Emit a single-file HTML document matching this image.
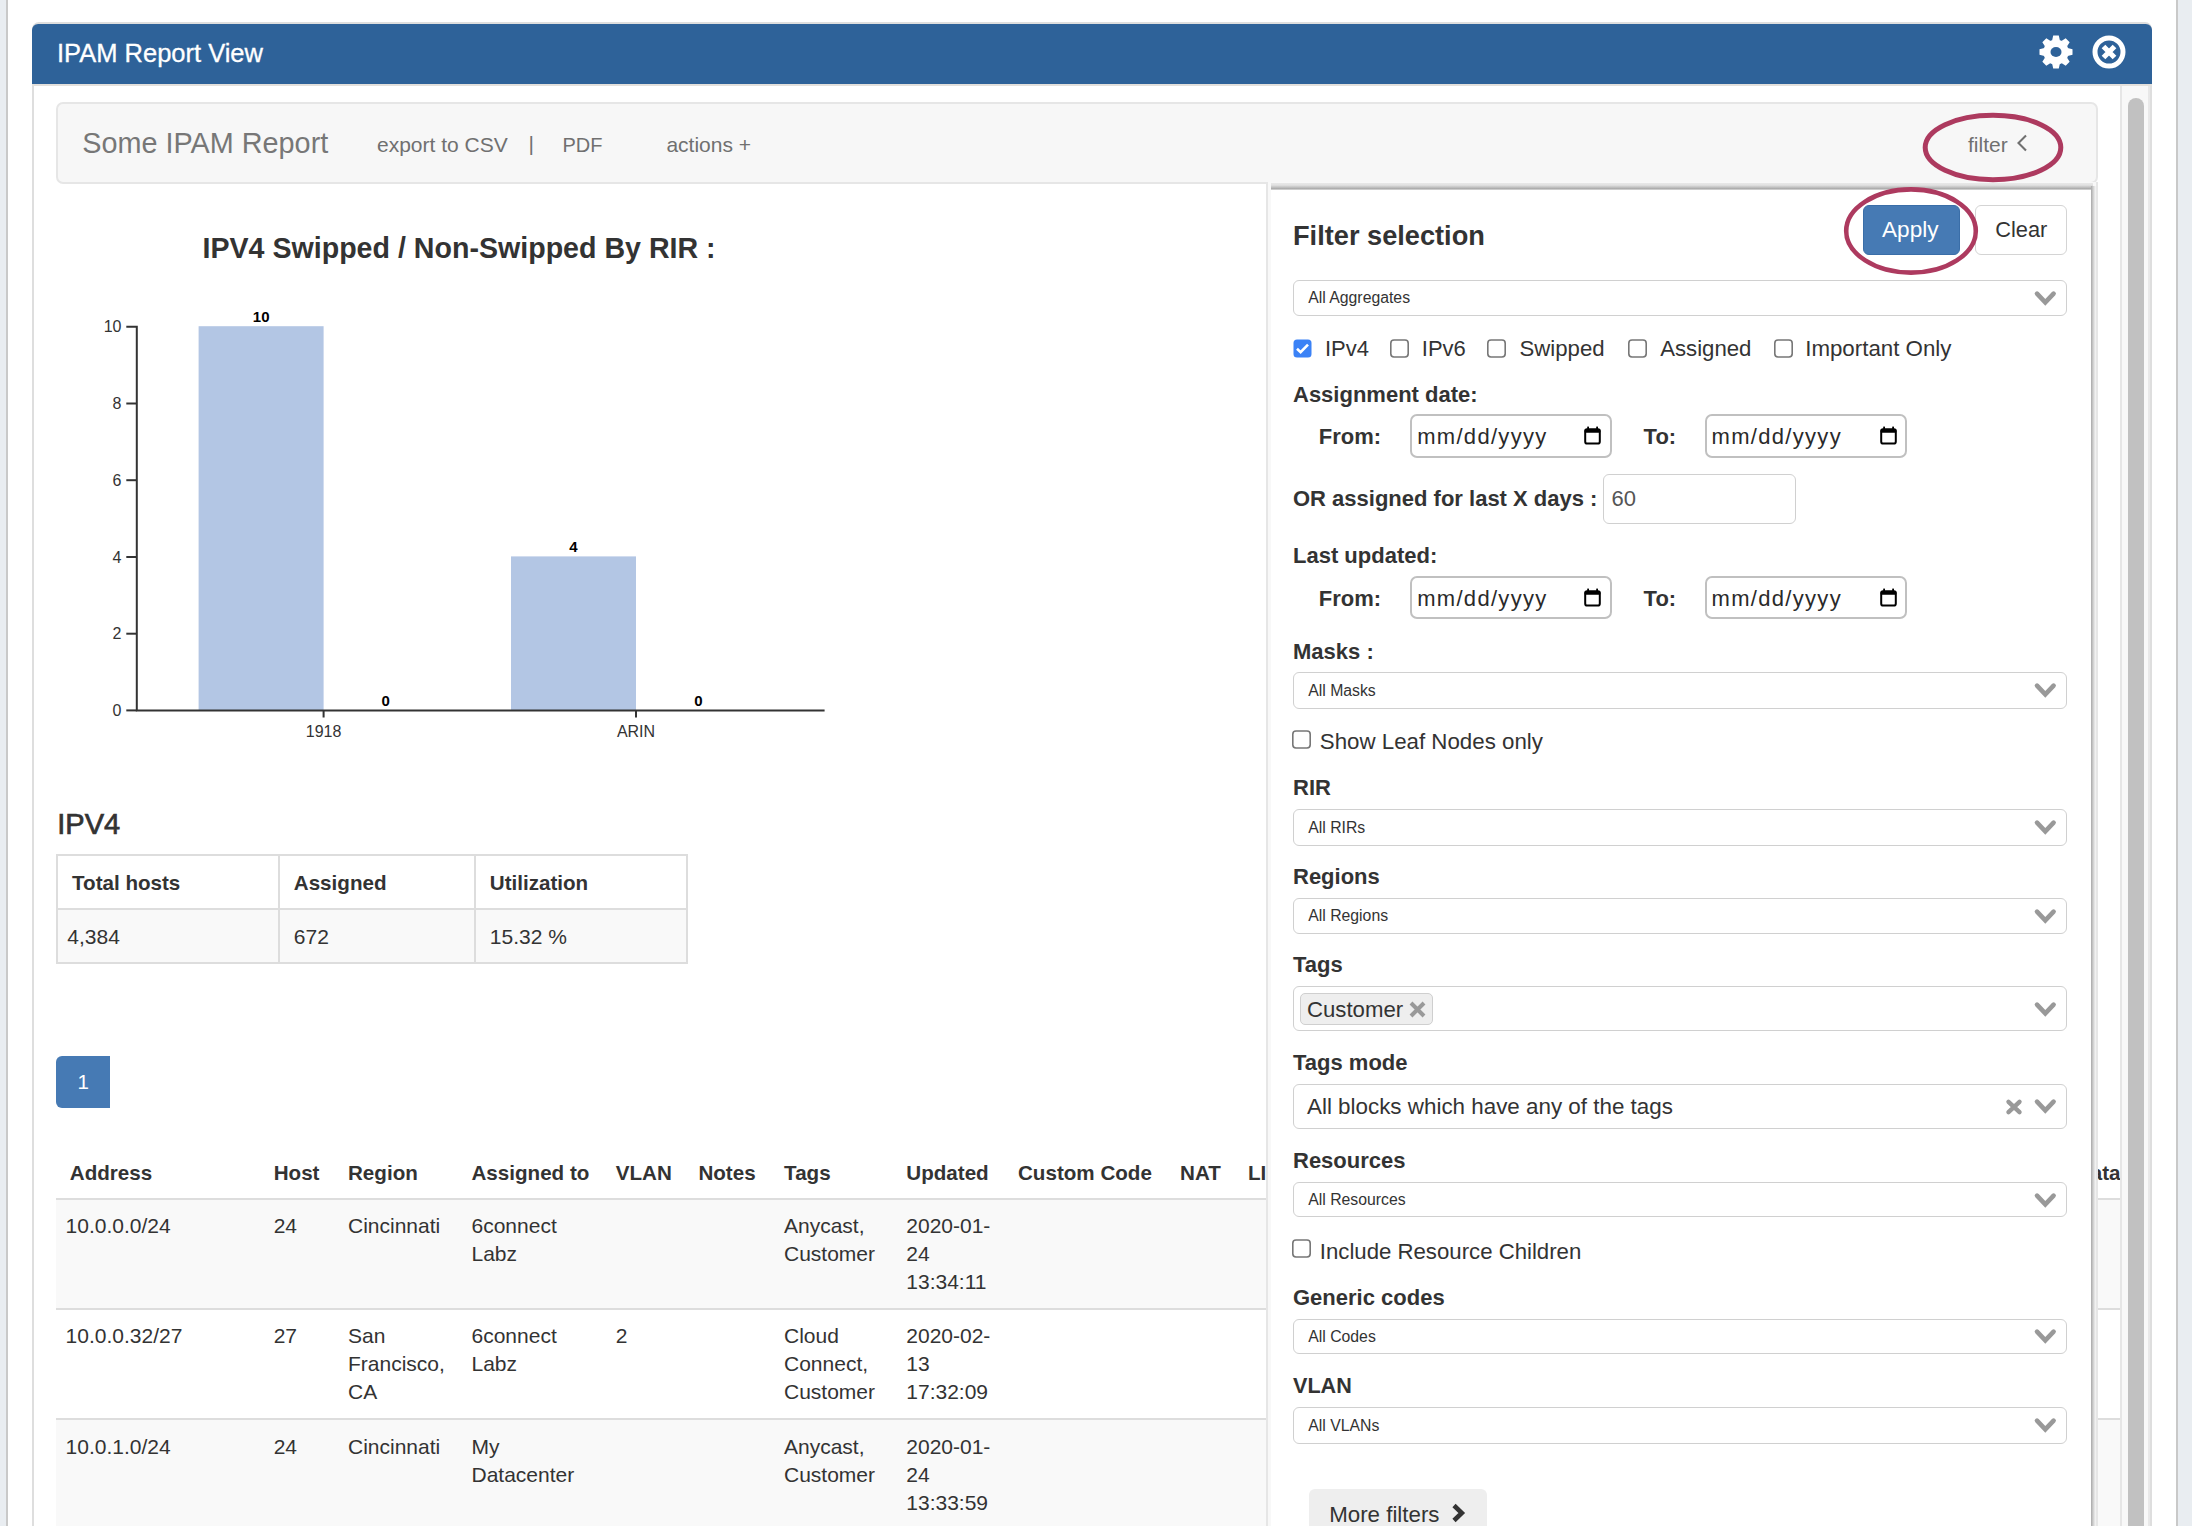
<!DOCTYPE html>
<html><head><meta charset="utf-8"><title>IPAM Report View</title>
<style>
html,body{margin:0;padding:0;}
body{width:2192px;height:1526px;overflow:hidden;position:relative;background:#fff;font-family:"Liberation Sans", sans-serif;}
.t{position:absolute;white-space:nowrap;}
.r{position:absolute;}
svg.r{overflow:visible;}
</style></head><body>
<div class="r" style="left:0.0px;top:0.0px;width:6.0px;height:1526.0px;background:#e9edf1"></div>
<div class="r" style="left:6.0px;top:0.0px;width:2.0px;height:1526.0px;background:#c9c9c9"></div>
<div class="r" style="left:2176.0px;top:0.0px;width:2.0px;height:1526.0px;background:#c9c9c9"></div>
<div class="r" style="left:2178.0px;top:0.0px;width:14.0px;height:1526.0px;background:#e9edf1"></div>
<div class="r" style="left:32.0px;top:22.0px;width:2120.0px;height:1600.0px;background:#fff;border:2px solid #dedede;border-radius:7px 7px 0 0;box-sizing:border-box"></div>
<div class="r" style="left:32.0px;top:23.5px;width:2120.0px;height:60.5px;background:#2e6299;border-radius:6px 6px 0 0"></div>
<div class="r" style="left:32.0px;top:84.0px;width:2120.0px;height:2.0px;background:#e3e0dc"></div>
<div class="t" style="left:57.0px;top:41.2px;font-size:25.5px;line-height:25.5px;font-weight:400;color:#fff;-webkit-text-stroke:0.3px #fff">IPAM Report View</div>
<svg class="r" style="left:2037.7px;top:34px" width="36" height="36" viewBox="0 0 36 36">
<g fill="#fff"><circle cx="18" cy="18" r="12.6"/>
<path d="M14.10 6.40 L15.20 1.50 L20.80 1.50 L21.90 6.40 Z M23.44 7.04 L27.69 4.35 L31.65 8.31 L28.96 12.56 Z M29.60 14.10 L34.50 15.20 L34.50 20.80 L29.60 21.90 Z M28.96 23.44 L31.65 27.69 L27.69 31.65 L23.44 28.96 Z M21.90 29.60 L20.80 34.50 L15.20 34.50 L14.10 29.60 Z M12.56 28.96 L8.31 31.65 L4.35 27.69 L7.04 23.44 Z M6.40 21.90 L1.50 20.80 L1.50 15.20 L6.40 14.10 Z M7.04 12.56 L4.35 8.31 L8.31 4.35 L12.56 7.04 Z"/></g>
<ellipse cx="18" cy="18" rx="5.5" ry="4.9" fill="#2e6299"/></svg>
<svg class="r" style="left:2091px;top:34.2px" width="36" height="36" viewBox="-18 -18 36 36">
<circle r="14" fill="none" stroke="#fff" stroke-width="5"/>
<path d="M-5.5 -5.5 L5.5 5.5 M5.5 -5.5 L-5.5 5.5" stroke="#fff" stroke-width="5.2" stroke-linecap="butt"/></svg>
<div class="r" style="left:2120.0px;top:86.0px;width:30.0px;height:1440.0px;background:#f8f8f8;border-left:2px solid #e6e6e6;border-right:2px solid #e8e8e8;box-sizing:border-box"></div>
<div class="r" style="left:2128.0px;top:98.0px;width:16.0px;height:1500.0px;background:#c1c1c1;border-radius:8px"></div>
<div class="r" style="left:56.0px;top:102.0px;width:2042.0px;height:82.0px;background:#f7f7f7;border:2px solid #e6e6e6;border-radius:7px;box-sizing:border-box"></div>
<div class="t" style="left:82.3px;top:129.1px;font-size:28.8px;line-height:28.8px;font-weight:400;color:#777;">Some IPAM Report</div>
<div class="t" style="left:377.0px;top:133.6px;font-size:21px;line-height:21px;font-weight:400;color:#707070;">export to CSV</div>
<div class="t" style="left:528.6px;top:133.0px;font-size:21px;line-height:21px;font-weight:400;color:#707070;">|</div>
<div class="t" style="left:562.5px;top:134.5px;font-size:20px;line-height:20px;font-weight:400;color:#707070;">PDF</div>
<div class="t" style="left:666.4px;top:133.6px;font-size:21px;line-height:21px;font-weight:400;color:#707070;">actions +</div>
<div class="t" style="left:1968.0px;top:134.4px;font-size:21px;line-height:21px;font-weight:400;color:#707070;">filter</div>
<svg class="r" style="left:2012px;top:132px" width="20" height="22" viewBox="0 0 20 22"><path d="M14 3.5 L6.5 11 L14 18.5" fill="none" stroke="#707070" stroke-width="2.1"/></svg>
<div class="t" style="left:202.5px;top:234.4px;font-size:28.6px;line-height:28.6px;font-weight:700;color:#333;">IPV4 Swipped / Non-Swipped By RIR :</div>
<svg class="r" style="left:0;top:0" width="900" height="760" viewBox="0 0 900 760"><rect x="198.6" y="326.2" width="125" height="384.2" fill="#b3c6e4"/><rect x="511" y="556.4" width="125" height="154" fill="#b3c6e4"/><g stroke="#333" stroke-width="2" fill="none"><path d="M126.3 326.8 H136.8 V710.4 H824.6"/><path d="M126.3 403.5 H136.8"/><path d="M126.3 480.2 H136.8"/><path d="M126.3 557.0 H136.8"/><path d="M126.3 633.7 H136.8"/><path d="M126.3 710.4 H136.8"/><path d="M323.6 710.4 V717.5 M636 710.4 V717.5"/></g><g font-family='"Liberation Sans"' font-size="16" fill="#333" text-anchor="end"><text x="121.5" y="332.3">10</text><text x="121.5" y="409.0">8</text><text x="121.5" y="485.7">6</text><text x="121.5" y="562.5">4</text><text x="121.5" y="639.2">2</text><text x="121.5" y="715.9">0</text></g><g font-family='"Liberation Sans"' font-size="16" fill="#333" text-anchor="middle"><text x="323.6" y="737">1918</text><text x="636" y="737">ARIN</text></g><g font-family='"Liberation Sans"' font-size="15" font-weight="700" fill="#000" text-anchor="middle"><text x="261.2" y="321.9">10</text><text x="385.6" y="706">0</text><text x="573.5" y="551.8">4</text><text x="698.5" y="706">0</text></g></svg>
<div class="t" style="left:57.3px;top:809.5px;font-size:29px;line-height:29px;font-weight:400;color:#333;-webkit-text-stroke:0.7px #333">IPV4</div>
<div class="r" style="left:56.0px;top:854.0px;width:632.0px;height:110.0px;border:2px solid #ddd;box-sizing:border-box"></div>
<div class="r" style="left:58.0px;top:910.0px;width:628.0px;height:52.0px;background:#f9f9f9"></div>
<div class="r" style="left:56.0px;top:908.0px;width:632.0px;height:2.0px;background:#ddd"></div>
<div class="r" style="left:278.0px;top:854.0px;width:2.0px;height:110.0px;background:#ddd"></div>
<div class="r" style="left:474.0px;top:854.0px;width:2.0px;height:110.0px;background:#ddd"></div>
<div class="t" style="left:72.0px;top:872.5px;font-size:20.6px;line-height:20.6px;font-weight:700;color:#333;">Total hosts</div>
<div class="t" style="left:293.8px;top:872.5px;font-size:20.6px;line-height:20.6px;font-weight:700;color:#333;">Assigned</div>
<div class="t" style="left:489.8px;top:872.5px;font-size:20.6px;line-height:20.6px;font-weight:700;color:#333;">Utilization</div>
<div class="t" style="left:67.3px;top:925.8px;font-size:21px;line-height:21px;font-weight:400;color:#333;">4,384</div>
<div class="t" style="left:293.8px;top:925.8px;font-size:21px;line-height:21px;font-weight:400;color:#333;">672</div>
<div class="t" style="left:489.8px;top:925.8px;font-size:21px;line-height:21px;font-weight:400;color:#333;">15.32 %</div>
<div class="r" style="left:56.0px;top:1056.0px;width:54.0px;height:52.0px;background:#467ab4;border-radius:6px 0 0 6px"></div>
<div class="t" style="left:77.5px;top:1072.0px;font-size:20.5px;line-height:20.5px;font-weight:400;color:#fff;">1</div>
<div class="r" style="left:56.0px;top:1198.0px;width:2064.0px;height:2.0px;background:#ddd"></div>
<div class="r" style="left:56.0px;top:1200.0px;width:2064.0px;height:108.0px;background:#f9f9f9"></div>
<div class="r" style="left:56.0px;top:1308.0px;width:2064.0px;height:2.0px;background:#ddd"></div>
<div class="r" style="left:56.0px;top:1418.0px;width:2064.0px;height:2.0px;background:#ddd"></div>
<div class="r" style="left:56.0px;top:1420.0px;width:2064.0px;height:120.0px;background:#f9f9f9"></div>
<div class="t" style="left:69.8px;top:1162.8px;font-size:20.6px;line-height:20.6px;font-weight:700;color:#333;">Address</div>
<div class="t" style="left:273.7px;top:1162.8px;font-size:20.6px;line-height:20.6px;font-weight:700;color:#333;">Host</div>
<div class="t" style="left:348.0px;top:1162.8px;font-size:20.6px;line-height:20.6px;font-weight:700;color:#333;">Region</div>
<div class="t" style="left:471.5px;top:1162.8px;font-size:20.6px;line-height:20.6px;font-weight:700;color:#333;">Assigned to</div>
<div class="t" style="left:615.7px;top:1162.8px;font-size:20.6px;line-height:20.6px;font-weight:700;color:#333;">VLAN</div>
<div class="t" style="left:698.4px;top:1162.8px;font-size:20.6px;line-height:20.6px;font-weight:700;color:#333;">Notes</div>
<div class="t" style="left:784.1px;top:1162.8px;font-size:20.6px;line-height:20.6px;font-weight:700;color:#333;">Tags</div>
<div class="t" style="left:906.3px;top:1162.8px;font-size:20.6px;line-height:20.6px;font-weight:700;color:#333;">Updated</div>
<div class="t" style="left:1018.0px;top:1162.8px;font-size:20.6px;line-height:20.6px;font-weight:700;color:#333;">Custom Code</div>
<div class="t" style="left:1180.1px;top:1162.8px;font-size:20.6px;line-height:20.6px;font-weight:700;color:#333;">NAT</div>
<div class="t" style="left:1248.0px;top:1162.8px;font-size:20.6px;line-height:20.6px;font-weight:700;color:#333;">LIR</div>
<div class="r" style="left:1266px;top:1150px;width:854px;height:40px;overflow:hidden"><div class="t" style="right:-0.5px;top:12.8px;font-size:20.6px;line-height:20.6px;font-weight:700;color:#333">Metadata</div></div>
<div class="t" style="left:65.6px;top:1212.2px;font-size:21px;line-height:28px;color:#333">10.0.0.0/24</div>
<div class="t" style="left:273.7px;top:1212.2px;font-size:21px;line-height:28px;color:#333">24</div>
<div class="t" style="left:348px;top:1212.2px;font-size:21px;line-height:28px;color:#333">Cincinnati</div>
<div class="t" style="left:471.5px;top:1212.2px;font-size:21px;line-height:28px;color:#333">6connect<br>Labz</div>
<div class="t" style="left:784px;top:1212.2px;font-size:21px;line-height:28px;color:#333">Anycast,<br>Customer</div>
<div class="t" style="left:906.3px;top:1212.2px;font-size:21px;line-height:28px;color:#333">2020-01-<br>24<br>13:34:11</div>
<div class="t" style="left:65.6px;top:1322.4px;font-size:21px;line-height:28px;color:#333">10.0.0.32/27</div>
<div class="t" style="left:273.7px;top:1322.4px;font-size:21px;line-height:28px;color:#333">27</div>
<div class="t" style="left:348px;top:1322.4px;font-size:21px;line-height:28px;color:#333">San<br>Francisco,<br>CA</div>
<div class="t" style="left:471.5px;top:1322.4px;font-size:21px;line-height:28px;color:#333">6connect<br>Labz</div>
<div class="t" style="left:615.7px;top:1322.4px;font-size:21px;line-height:28px;color:#333">2</div>
<div class="t" style="left:784px;top:1322.4px;font-size:21px;line-height:28px;color:#333">Cloud<br>Connect,<br>Customer</div>
<div class="t" style="left:906.3px;top:1322.4px;font-size:21px;line-height:28px;color:#333">2020-02-<br>13<br>17:32:09</div>
<div class="t" style="left:65.6px;top:1432.7px;font-size:21px;line-height:28px;color:#333">10.0.1.0/24</div>
<div class="t" style="left:273.7px;top:1432.7px;font-size:21px;line-height:28px;color:#333">24</div>
<div class="t" style="left:348px;top:1432.7px;font-size:21px;line-height:28px;color:#333">Cincinnati</div>
<div class="t" style="left:471.5px;top:1432.7px;font-size:21px;line-height:28px;color:#333">My<br>Datacenter</div>
<div class="t" style="left:784px;top:1432.7px;font-size:21px;line-height:28px;color:#333">Anycast,<br>Customer</div>
<div class="t" style="left:906.3px;top:1432.7px;font-size:21px;line-height:28px;color:#333">2020-01-<br>24<br>13:33:59</div>
<div class="r" style="left:1266.0px;top:182.0px;width:832.0px;height:1400.0px;background:#f8f8f8;border-left:2px solid #e6e6e6;border-right:2px solid #e6e6e6;box-sizing:border-box"></div>
<div class="r" style="left:1271.0px;top:183.0px;width:822.0px;height:1400.0px;background:#fff"></div>
<div class="r" style="left:1271.0px;top:183.0px;width:822.0px;height:6.6px;background:linear-gradient(to bottom,#e8e8e8 0%,#e2e2e2 30%,#bdbdbd 65%,#a6a6a6 85%,#efefef 100%)"></div>
<div class="r" style="left:2091.0px;top:186.0px;width:5.0px;height:1400.0px;background:linear-gradient(to right,#a8a8a8 0%,#d0d0d0 45%,#ececec 80%,#f6f6f6 100%)"></div>
<div class="t" style="left:1293.0px;top:221.8px;font-size:27.2px;line-height:27.2px;font-weight:700;color:#333;">Filter selection</div>
<div class="r" style="left:1863.0px;top:205.0px;width:97.0px;height:50.0px;background:#467ab4;border:1px solid #3a6ea8;border-radius:6px;box-sizing:border-box"></div>
<div class="t" style="left:1882.0px;top:219.1px;font-size:22.6px;line-height:22.6px;font-weight:400;color:#fff;">Apply</div>
<div class="r" style="left:1975.0px;top:205.0px;width:92.0px;height:50.0px;background:#fff;border:1px solid #d4d4d4;border-radius:6px;box-sizing:border-box"></div>
<div class="t" style="left:1995.2px;top:218.7px;font-size:21.8px;line-height:21.8px;font-weight:400;color:#333;">Clear</div>
<div class="r" style="left:1293.0px;top:280.0px;width:773.6px;height:36.0px;border:1px solid #d0d0d0;border-radius:6px;box-sizing:border-box;background:#fff"></div>
<div class="t" style="left:1308.2px;top:290.2px;font-size:15.8px;line-height:15.8px;font-weight:400;color:#333;">All Aggregates</div>
<svg class="r" style="left:2034px;top:287.6px" width="23" height="22" viewBox="0 0 23 22"><path d="M3 5.6 L11.3 14.3 L19.6 5.6" fill="none" stroke="#999" stroke-width="4.6" stroke-linecap="round" stroke-linejoin="miter"/></svg>
<svg class="r" style="left:1293px;top:339px" width="19" height="19" viewBox="0 0 19 19"><rect x="0.5" y="0.5" width="18" height="18" rx="3.5" fill="#3b82f6"/><path d="M4 9.8 L7.6 13.2 L15 5.6" fill="none" stroke="#fff" stroke-width="2.6"/></svg>
<div class="t" style="left:1325.0px;top:338.3px;font-size:22px;line-height:22px;font-weight:400;color:#333;">IPv4</div>
<svg class="r" style="left:1390.4px;top:339px" width="19" height="19" viewBox="0 0 19 19"><rect x="0.8" y="1.0" width="17.4" height="17.0" rx="3.2" fill="#fff" stroke="#777" stroke-width="1.6"/></svg>
<div class="t" style="left:1421.8px;top:338.3px;font-size:22px;line-height:22px;font-weight:400;color:#333;">IPv6</div>
<svg class="r" style="left:1486.9px;top:339px" width="19" height="19" viewBox="0 0 19 19"><rect x="0.8" y="1.0" width="17.4" height="17.0" rx="3.2" fill="#fff" stroke="#777" stroke-width="1.6"/></svg>
<div class="t" style="left:1519.5px;top:338.1px;font-size:22.2px;line-height:22.2px;font-weight:400;color:#333;">Swipped</div>
<svg class="r" style="left:1628.4px;top:339px" width="19" height="19" viewBox="0 0 19 19"><rect x="0.8" y="1.0" width="17.4" height="17.0" rx="3.2" fill="#fff" stroke="#777" stroke-width="1.6"/></svg>
<div class="t" style="left:1660.2px;top:338.1px;font-size:22.2px;line-height:22.2px;font-weight:400;color:#333;">Assigned</div>
<svg class="r" style="left:1773.9px;top:339px" width="19" height="19" viewBox="0 0 19 19"><rect x="0.8" y="1.0" width="17.4" height="17.0" rx="3.2" fill="#fff" stroke="#777" stroke-width="1.6"/></svg>
<div class="t" style="left:1805.2px;top:338.0px;font-size:22.3px;line-height:22.3px;font-weight:400;color:#333;">Important Only</div>
<div class="t" style="left:1293.0px;top:383.9px;font-size:22px;line-height:22px;font-weight:700;color:#333;">Assignment date:</div>
<div class="t" style="left:1318.8px;top:425.7px;font-size:22px;line-height:22px;font-weight:700;color:#333;">From:</div>
<div class="t" style="left:1643.6px;top:425.7px;font-size:22px;line-height:22px;font-weight:700;color:#333;">To:</div>
<div class="r" style="left:1410.4px;top:414.3px;width:201.3px;height:43.5px;border:2.5px solid #c0c0c0;border-radius:7px;box-sizing:border-box;background:#fff"></div>
<div class="t" style="left:1417.2px;top:425.7px;font-size:22px;line-height:22px;font-weight:400;color:#2a2a2a;letter-spacing:1.3px">mm/dd/yyyy</div>
<svg class="r" style="left:1584.0px;top:426.3px" width="18" height="19" viewBox="0 0 18 19"><rect x="1.2" y="3.6" width="14.6" height="14" rx="2.2" fill="none" stroke="#000" stroke-width="2"/><rect x="0.5" y="2.6" width="16" height="4.2" rx="1.5" fill="#000"/><rect x="3.2" y="0.6" width="1.8" height="3" fill="#000"/><rect x="12.2" y="0.6" width="1.8" height="3" fill="#000"/></svg>
<div class="r" style="left:1704.8px;top:414.3px;width:202.4px;height:43.5px;border:2.5px solid #c0c0c0;border-radius:7px;box-sizing:border-box;background:#fff"></div>
<div class="t" style="left:1711.6px;top:425.7px;font-size:22px;line-height:22px;font-weight:400;color:#2a2a2a;letter-spacing:1.3px">mm/dd/yyyy</div>
<svg class="r" style="left:1879.5px;top:426.3px" width="18" height="19" viewBox="0 0 18 19"><rect x="1.2" y="3.6" width="14.6" height="14" rx="2.2" fill="none" stroke="#000" stroke-width="2"/><rect x="0.5" y="2.6" width="16" height="4.2" rx="1.5" fill="#000"/><rect x="3.2" y="0.6" width="1.8" height="3" fill="#000"/><rect x="12.2" y="0.6" width="1.8" height="3" fill="#000"/></svg>
<div class="t" style="left:1293.0px;top:488.4px;font-size:22px;line-height:22px;font-weight:700;color:#333;">OR assigned for last X days :</div>
<div class="r" style="left:1602.8px;top:473.6px;width:193.0px;height:50.0px;border:1px solid #d0d0d0;border-radius:6px;box-sizing:border-box;background:#fff"></div>
<div class="t" style="left:1611.4px;top:487.6px;font-size:22px;line-height:22px;font-weight:400;color:#555;">60</div>
<div class="t" style="left:1293.0px;top:545.2px;font-size:22px;line-height:22px;font-weight:700;color:#333;">Last updated:</div>
<div class="t" style="left:1318.8px;top:587.8px;font-size:22px;line-height:22px;font-weight:700;color:#333;">From:</div>
<div class="t" style="left:1643.6px;top:587.8px;font-size:22px;line-height:22px;font-weight:700;color:#333;">To:</div>
<div class="r" style="left:1410.4px;top:575.6px;width:201.3px;height:43.5px;border:2.5px solid #c0c0c0;border-radius:7px;box-sizing:border-box;background:#fff"></div>
<div class="t" style="left:1417.2px;top:587.8px;font-size:22px;line-height:22px;font-weight:400;color:#2a2a2a;letter-spacing:1.3px">mm/dd/yyyy</div>
<svg class="r" style="left:1584.0px;top:587.6px" width="18" height="19" viewBox="0 0 18 19"><rect x="1.2" y="3.6" width="14.6" height="14" rx="2.2" fill="none" stroke="#000" stroke-width="2"/><rect x="0.5" y="2.6" width="16" height="4.2" rx="1.5" fill="#000"/><rect x="3.2" y="0.6" width="1.8" height="3" fill="#000"/><rect x="12.2" y="0.6" width="1.8" height="3" fill="#000"/></svg>
<div class="r" style="left:1704.8px;top:575.6px;width:202.4px;height:43.5px;border:2.5px solid #c0c0c0;border-radius:7px;box-sizing:border-box;background:#fff"></div>
<div class="t" style="left:1711.6px;top:587.8px;font-size:22px;line-height:22px;font-weight:400;color:#2a2a2a;letter-spacing:1.3px">mm/dd/yyyy</div>
<svg class="r" style="left:1879.5px;top:587.6px" width="18" height="19" viewBox="0 0 18 19"><rect x="1.2" y="3.6" width="14.6" height="14" rx="2.2" fill="none" stroke="#000" stroke-width="2"/><rect x="0.5" y="2.6" width="16" height="4.2" rx="1.5" fill="#000"/><rect x="3.2" y="0.6" width="1.8" height="3" fill="#000"/><rect x="12.2" y="0.6" width="1.8" height="3" fill="#000"/></svg>
<div class="t" style="left:1293.0px;top:640.6px;font-size:22px;line-height:22px;font-weight:700;color:#333;">Masks :</div>
<div class="r" style="left:1293.0px;top:672.3px;width:773.6px;height:37.0px;border:1px solid #d0d0d0;border-radius:6px;box-sizing:border-box;background:#fff"></div>
<div class="t" style="left:1308.2px;top:683.0px;font-size:15.8px;line-height:15.8px;font-weight:400;color:#333;">All Masks</div>
<svg class="r" style="left:2034px;top:680.4px" width="23" height="22" viewBox="0 0 23 22"><path d="M3 5.6 L11.3 14.3 L19.6 5.6" fill="none" stroke="#999" stroke-width="4.6" stroke-linecap="round" stroke-linejoin="miter"/></svg>
<svg class="r" style="left:1292.4px;top:729.5px" width="19" height="19" viewBox="0 0 19 19"><rect x="0.8" y="1.0" width="17.4" height="17.0" rx="3.2" fill="#fff" stroke="#777" stroke-width="1.6"/></svg>
<div class="t" style="left:1319.8px;top:731.1px;font-size:22.3px;line-height:22.3px;font-weight:400;color:#333;">Show Leaf Nodes only</div>
<div class="t" style="left:1293.0px;top:777.2px;font-size:22px;line-height:22px;font-weight:700;color:#333;">RIR</div>
<div class="r" style="left:1293.0px;top:809.2px;width:773.6px;height:36.4px;border:1px solid #d0d0d0;border-radius:6px;box-sizing:border-box;background:#fff"></div>
<div class="t" style="left:1308.2px;top:819.6px;font-size:15.8px;line-height:15.8px;font-weight:400;color:#333;">All RIRs</div>
<svg class="r" style="left:2034px;top:817.0px" width="23" height="22" viewBox="0 0 23 22"><path d="M3 5.6 L11.3 14.3 L19.6 5.6" fill="none" stroke="#999" stroke-width="4.6" stroke-linecap="round" stroke-linejoin="miter"/></svg>
<div class="t" style="left:1293.0px;top:866.0px;font-size:22px;line-height:22px;font-weight:700;color:#333;">Regions</div>
<div class="r" style="left:1293.0px;top:898.0px;width:773.6px;height:36.0px;border:1px solid #d0d0d0;border-radius:6px;box-sizing:border-box;background:#fff"></div>
<div class="t" style="left:1308.2px;top:908.2px;font-size:15.8px;line-height:15.8px;font-weight:400;color:#333;">All Regions</div>
<svg class="r" style="left:2034px;top:905.6px" width="23" height="22" viewBox="0 0 23 22"><path d="M3 5.6 L11.3 14.3 L19.6 5.6" fill="none" stroke="#999" stroke-width="4.6" stroke-linecap="round" stroke-linejoin="miter"/></svg>
<div class="t" style="left:1293.0px;top:953.6px;font-size:22px;line-height:22px;font-weight:700;color:#333;">Tags</div>
<div class="r" style="left:1293.0px;top:986.2px;width:774.0px;height:45.3px;border:1px solid #d0d0d0;border-radius:6px;box-sizing:border-box;background:#fff"></div>
<div class="r" style="left:1300.3px;top:992.8px;width:132.5px;height:32.0px;background:#eeeeee;border:1px solid #cfcfcf;border-radius:5px;box-sizing:border-box"></div>
<div class="t" style="left:1307.0px;top:998.5px;font-size:22.2px;line-height:22.2px;font-weight:400;color:#333;">Customer</div>
<svg class="r" style="left:1408px;top:1001px" width="20" height="17" viewBox="0 0 20 17"><path d="M3 2 L16 15 M16 2 L3 15" stroke="#999" stroke-width="4"/></svg>
<svg class="r" style="left:2034px;top:998.8px" width="23" height="22" viewBox="0 0 23 22"><path d="M3 5.6 L11.3 14.3 L19.6 5.6" fill="none" stroke="#999" stroke-width="4.6" stroke-linecap="round" stroke-linejoin="miter"/></svg>
<div class="t" style="left:1293.0px;top:1052.0px;font-size:22px;line-height:22px;font-weight:700;color:#333;">Tags mode</div>
<div class="r" style="left:1293.0px;top:1084.3px;width:774.0px;height:44.8px;border:1px solid #d0d0d0;border-radius:6px;box-sizing:border-box;background:#fff"></div>
<div class="t" style="left:1307.0px;top:1096.0px;font-size:22.4px;line-height:22.4px;font-weight:400;color:#333;">All blocks which have any of the tags</div>
<svg class="r" style="left:2004px;top:1096.5px" width="20" height="20" viewBox="0 0 20 20"><path d="M4.5 4.8 L15.5 15.2 M15.5 4.8 L4.5 15.2" stroke="#999" stroke-width="4.4" stroke-linecap="round"/></svg>
<svg class="r" style="left:2034px;top:1096.3px" width="23" height="22" viewBox="0 0 23 22"><path d="M3 5.6 L11.3 14.3 L19.6 5.6" fill="none" stroke="#999" stroke-width="4.6" stroke-linecap="round" stroke-linejoin="miter"/></svg>
<div class="t" style="left:1293.0px;top:1149.7px;font-size:22px;line-height:22px;font-weight:700;color:#333;">Resources</div>
<div class="r" style="left:1293.0px;top:1182.4px;width:773.6px;height:35.0px;border:1px solid #d0d0d0;border-radius:6px;box-sizing:border-box;background:#fff"></div>
<div class="t" style="left:1308.2px;top:1192.1px;font-size:15.8px;line-height:15.8px;font-weight:400;color:#333;">All Resources</div>
<svg class="r" style="left:2034px;top:1189.5px" width="23" height="22" viewBox="0 0 23 22"><path d="M3 5.6 L11.3 14.3 L19.6 5.6" fill="none" stroke="#999" stroke-width="4.6" stroke-linecap="round" stroke-linejoin="miter"/></svg>
<svg class="r" style="left:1292.4px;top:1239.2px" width="19" height="19" viewBox="0 0 19 19"><rect x="0.8" y="1.0" width="17.4" height="17.0" rx="3.2" fill="#fff" stroke="#777" stroke-width="1.6"/></svg>
<div class="t" style="left:1319.8px;top:1240.5px;font-size:22.2px;line-height:22.2px;font-weight:400;color:#333;">Include Resource Children</div>
<div class="t" style="left:1293.0px;top:1286.9px;font-size:22px;line-height:22px;font-weight:700;color:#333;">Generic codes</div>
<div class="r" style="left:1293.0px;top:1318.8px;width:773.6px;height:35.2px;border:1px solid #d0d0d0;border-radius:6px;box-sizing:border-box;background:#fff"></div>
<div class="t" style="left:1308.2px;top:1328.6px;font-size:15.8px;line-height:15.8px;font-weight:400;color:#333;">All Codes</div>
<svg class="r" style="left:2034px;top:1326.0px" width="23" height="22" viewBox="0 0 23 22"><path d="M3 5.6 L11.3 14.3 L19.6 5.6" fill="none" stroke="#999" stroke-width="4.6" stroke-linecap="round" stroke-linejoin="miter"/></svg>
<div class="t" style="left:1293.0px;top:1375.3px;font-size:21.6px;line-height:21.6px;font-weight:700;color:#333;">VLAN</div>
<div class="r" style="left:1293.0px;top:1407.2px;width:773.6px;height:36.6px;border:1px solid #d0d0d0;border-radius:6px;box-sizing:border-box;background:#fff"></div>
<div class="t" style="left:1308.2px;top:1417.7px;font-size:15.8px;line-height:15.8px;font-weight:400;color:#333;">All VLANs</div>
<svg class="r" style="left:2034px;top:1415.1px" width="23" height="22" viewBox="0 0 23 22"><path d="M3 5.6 L11.3 14.3 L19.6 5.6" fill="none" stroke="#999" stroke-width="4.6" stroke-linecap="round" stroke-linejoin="miter"/></svg>
<div class="r" style="left:1309.0px;top:1489.0px;width:178.0px;height:60.0px;background:#eeeeee;border-radius:6px"></div>
<div class="t" style="left:1329.2px;top:1503.8px;font-size:22.3px;line-height:22.3px;font-weight:400;color:#333;">More filters</div>
<svg class="r" style="left:1449px;top:1501.8px" width="20" height="22" viewBox="0 0 20 22"><path d="M5 3.5 L12.8 11 L5 18.5" fill="none" stroke="#333" stroke-width="4.6"/></svg>
<svg class="r" style="left:0;top:0" width="2192" height="400" viewBox="0 0 2192 400"><g fill="none" stroke="#ad3a5f" stroke-width="5"><ellipse cx="1993" cy="147.5" rx="67.8" ry="32.2"/><ellipse cx="1911" cy="231" rx="64.8" ry="41.6" stroke-width="4.6"/></g></svg>
</body></html>
